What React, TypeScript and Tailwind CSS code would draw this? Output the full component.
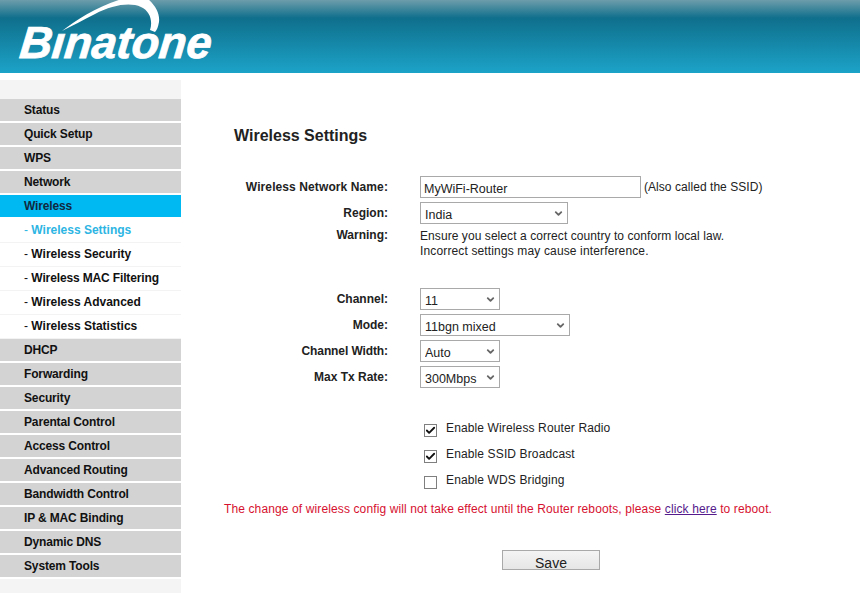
import { Check, ChevronDown } from 'lucide-react';

const menu = [
  { label: 'Status' },
  { label: 'Quick Setup' },
  { label: 'WPS' },
  { label: 'Network' },
  { label: 'Wireless', active: true },
  { label: 'Wireless Settings', sub: true, current: true },
  { label: 'Wireless Security', sub: true },
  { label: 'Wireless MAC Filtering', sub: true, tight: true },
  { label: 'Wireless Advanced', sub: true },
  { label: 'Wireless Statistics', sub: true },
  { label: 'DHCP' },
  { label: 'Forwarding' },
  { label: 'Security' },
  { label: 'Parental Control' },
  { label: 'Access Control' },
  { label: 'Advanced Routing' },
  { label: 'Bandwidth Control' },
  { label: 'IP & MAC Binding' },
  { label: 'Dynamic DNS' },
  { label: 'System Tools' },
];

function Logo() {
  return (
    <div className="relative w-[230px] h-[73px] overflow-hidden">
      <svg className="absolute left-0 top-0" width="230" height="73" viewBox="0 0 230 73">
        <path d="M62 31 C76 20 98 6 122 -1 L148 -1 C156 6 160 14 159 22 C158 27 157 30 155 32 L150 30 C153 21 150 11 141 7 C130 2 112 5 95 14 C83 20 72 26 62 31 Z" fill="#fff" />
      </svg>
      <span
        aria-label="Binatone"
        className="absolute left-[20px] top-[17px] inline-block -skew-x-6 font-['Liberation_Sans',sans-serif] font-bold italic text-[45px] leading-[52px] tracking-[-0.1px] text-white [-webkit-text-stroke:0.8px_white]"
      >
        Bınatone
      </span>
    </div>
  );
}

function Sidebar() {
  return (
    <aside className="w-[181px] shrink-0 mt-[7px] bg-[#f5f4f4] pt-[19px] pb-[16px]">
      {menu.map((item) => {
        if (item.sub) {
          return (
            <div
              key={item.label}
              className={`h-[24px] pl-[24px] bg-white border-b border-[#f3f3f3] font-bold text-[12px] leading-[23px] ${
                item.tight ? 'tracking-[-0.14px]' : 'tracking-normal'
              } ${item.current ? 'text-[#2db5e3]' : 'text-[#111]'}`}
            >
              <span className="font-normal tracking-normal">- </span>
              {item.label}
            </div>
          );
        }
        return (
          <div key={item.label} className="h-[24px] bg-white pb-[2px]">
            <div
              className={`h-[22px] pl-[24px] font-bold text-[12px] leading-[22px] tracking-[-0.15px] ${
                item.active ? 'bg-[#00b9f2] text-[#10293f]' : 'bg-[#d3d3d3] text-[#111]'
              }`}
            >
              {item.label}
            </div>
          </div>
        );
      })}
    </aside>
  );
}

function Select({ value, width }: { value: string; width: string }) {
  return (
    <div className={`relative h-[22px] ${width}`}>
      <select
        defaultValue={value}
        className="block w-full h-full appearance-none border border-[#a9a9a9] bg-white pl-[4px] pt-[3px] text-[12.5px] leading-[18px] text-[#222] outline-none"
      >
        <option>{value}</option>
      </select>
      <ChevronDown
        className="absolute right-[4px] top-[6px] w-[11px] h-[11px] text-[#666] pointer-events-none"
        strokeWidth={4}
      />
    </div>
  );
}

function Row({
  label,
  className,
  labelClass = 'pt-[4px]',
  children,
}: {
  label: string;
  className: string;
  labelClass?: string;
  children: React.ReactNode;
}) {
  return (
    <div className={`flex items-start ${className}`}>
      <div className={`w-[164px] mr-[32px] text-right font-bold text-[12px] leading-[14px] text-[#222] ${labelClass}`}>
        {label}
      </div>
      <div>{children}</div>
    </div>
  );
}

function Box({ label, checked }: { label: string; checked?: boolean }) {
  return (
    <div className="h-[26px] flex items-start pl-[4px]">
      <span className="w-[13px] h-[13px] mt-[4px] border border-[#7f7f7f] bg-white flex items-center justify-center">
        {checked && <Check className="w-[11px] h-[11px] text-[#111]" strokeWidth={4} />}
      </span>
      <span className="ml-[9px] mt-[1px] text-[12px] leading-[14px] tracking-[0.13px] text-[#222]">{label}</span>
    </div>
  );
}

export default function App() {
  return (
    <div className="w-[860px] h-[593px] overflow-hidden bg-white font-['Liberation_Sans',Arial,sans-serif]">
      <header className="h-[73px] bg-[linear-gradient(to_bottom,#6d9dab_0px,#0f6f8c_18px,#1ca3c8_73px)]">
        <Logo />
      </header>

      <div className="flex">
        <Sidebar />

        <main className="flex-1 pl-[43px] pt-[54px]">
          <h1 className="pl-[10px] font-bold text-[16px] leading-[18px] text-[#222]">Wireless Settings</h1>

          <div className="mt-[31px]">
            <Row label="Wireless Network Name:" className="h-[26px]" labelClass="pt-[4px] tracking-[0.1px]">
              <div className="flex items-center">
                <input
                  readOnly
                  value="MyWiFi-Router"
                  className="w-[221px] h-[22px] border border-[#a9a9a9] pl-[3px] pt-[3px] text-[12.5px] text-[#222] outline-none"
                />
                <span className="ml-[3px] text-[12px] tracking-[0.05px] text-[#222]">(Also called the SSID)</span>
              </div>
            </Row>
            <Row label="Region:" className="h-[26px]">
              <Select value="India" width="w-[148px]" />
            </Row>
            <Row label="Warning:" className="h-[60px]" labelClass="pt-0">
              <p className="pt-[1px] text-[12px] leading-[15px] tracking-[0.07px] text-[#222]">
                Ensure you select a correct country to conform local law.
                <br />
                <span className="tracking-[0.14px]">Incorrect settings may cause interference.</span>
              </p>
            </Row>
            <Row label="Channel:" className="h-[26px]">
              <Select value="11" width="w-[80px]" />
            </Row>
            <Row label="Mode:" className="h-[26px]">
              <Select value="11bgn mixed" width="w-[150px]" />
            </Row>
            <Row label="Channel Width:" className="h-[26px]" labelClass="pt-[4px] tracking-[-0.1px]">
              <Select value="Auto" width="w-[80px]" />
            </Row>
            <Row label="Max Tx Rate:" className="h-[22px]">
              <Select value="300Mbps" width="w-[80px]" />
            </Row>
          </div>

          <div className="mt-[32px] ml-[196px]">
            <Box label="Enable Wireless Router Radio" checked />
            <Box label="Enable SSID Broadcast" checked />
            <Box label="Enable WDS Bridging" />
          </div>

          <p className="mt-[4px] text-[12px] leading-[14px] tracking-[0.12px] text-[#d6112f]">
            The change of wireless config will not take effect until the Router reboots, please{' '}
            <a href="#" className="underline text-[#551a8b]">
              click here
            </a>{' '}
            to reboot.
          </p>

          <div className="mt-[34px] ml-[278px]">
            <button className="block w-[98px] h-[20px] border border-[#a9a9a9] bg-[linear-gradient(to_bottom,#f4f4f4,#e6e6e6)] text-[14px] leading-[18px] pt-[3px] text-[#222]">
              Save
            </button>
          </div>
        </main>
      </div>
    </div>
  );
}
